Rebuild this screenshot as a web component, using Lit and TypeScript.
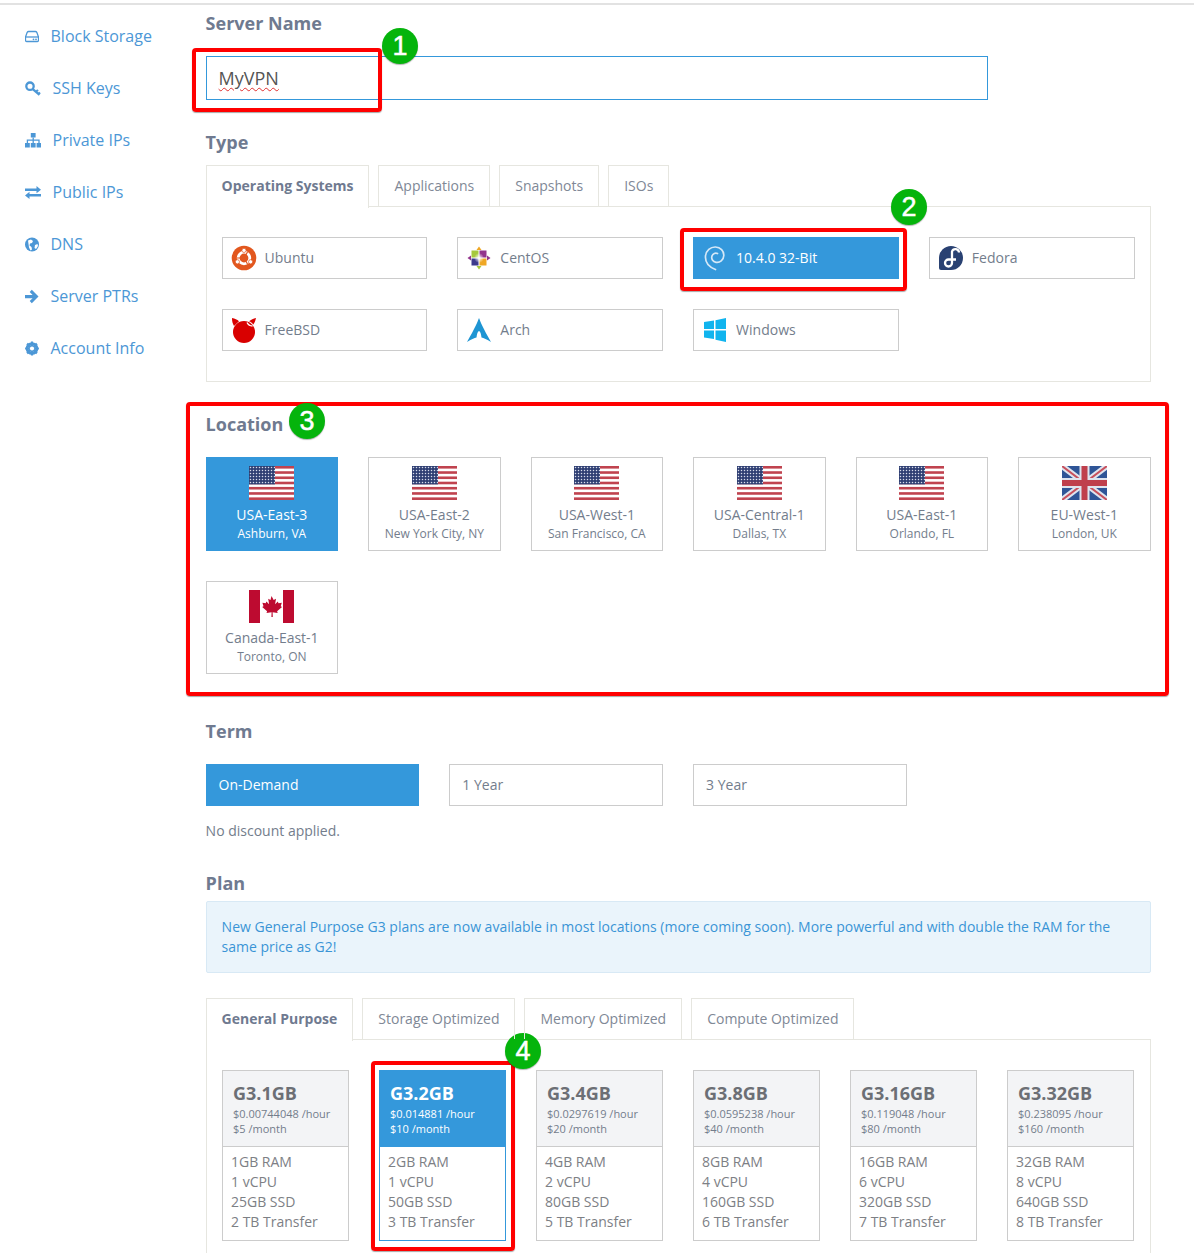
import { LitElement, html, css, svg } from 'lit';
import { customElement } from 'lit/decorators.js';

const usFlag = (id: string) => html`<svg class="flag" viewBox="0 0 45 34" width="45" height="34">
  <rect width="45" height="34" fill="#fff" />
  ${[0, 1, 2, 3, 4, 5, 6].map((i) => svg`<rect y=${(i * 34) / 6.5} width="45" height="2.6" fill="#c0434f" />`)}
  <rect width="26" height="18.4" fill="#2f3f73" />
  <pattern id=${id} width="3" height="3" patternUnits="userSpaceOnUse"><circle cx="1.5" cy="1.5" r=".75" fill="#d8dcea" /></pattern>
  <rect width="26" height="18.4" fill="url(#${id})" />
</svg>`;

const ukFlag = html`<svg class="flag" viewBox="0 0 45 34" width="45" height="34">
  <rect width="45" height="34" fill="#2f5597" />
  <path d="M0 0L45 34M45 0L0 34" stroke="#dfe4ee" stroke-width="6" />
  <path d="M0 0L45 34M45 0L0 34" stroke="#c8505c" stroke-width="2" />
  <path d="M22.5 0V34M0 17H45" stroke="#dfe4ee" stroke-width="10" />
  <path d="M22.5 0V34M0 17H45" stroke="#bf3f4c" stroke-width="6" />
</svg>`;

const caFlag = html`<svg class="flag" viewBox="0 0 45 33" width="45" height="33">
  <rect width="45" height="33" fill="#fff" />
  <rect width="11" height="33" fill="#bd0b30" />
  <rect x="34" width="11" height="33" fill="#bd0b30" />
  <path d="M22.5 6l2.200 4 2.300-1.200-.9 5.400 2.700-2.700.7 1.800 3.300-.6-1.100 3.600 1.300.8-4.900 4.100.6 1.800-5.100-.7.2 4.700h-1.400l.2-4.700-5.100.7.6-1.800-4.900-4.100 1.300-.8-1.100-3.600 3.300.6.7-1.800 2.700 2.700-.9-5.400 2.300 1.200z" fill="#bd0b30" />
</svg>`;

const osIcons: Record<string, unknown> = {
  ubuntu: html`<svg viewBox="0 0 26 26" width="26" height="26">
    <circle cx="13" cy="13" r="12.3" fill="#e2571e" />
    <circle cx="13" cy="13" r="5.8" fill="none" stroke="#fff" stroke-width="2.8" />
    <circle cx="13" cy="5.4" r="2.1" fill="#fff" stroke="#e2571e" stroke-width=".7" />
    <circle cx="6.4" cy="16.8" r="2.1" fill="#fff" stroke="#e2571e" stroke-width=".7" />
    <circle cx="19.6" cy="16.800" r="2.1" fill="#fff" stroke="#e2571e" stroke-width=".7" />
    <path d="M6 13h3.500M16.500 7l-1.700 3M16.500 19l-1.700-3" stroke="#e2571e" stroke-width="1.200" />
  </svg>`,
  centos: html`<svg viewBox="0 0 26 26" width="26" height="26">
    <defs>
      <radialGradient id="centre"><stop offset="0" stop-color="#fff" /><stop offset="1" stop-color="#fff" stop-opacity="0" /></radialGradient>
    </defs>
    <rect x="5.500" y="5.500" width="7" height="7" fill="#a6c83c" />
    <rect x="13.500" y="5.500" width="7" height="7" fill="#93358c" />
    <rect x="5.500" y="13.500" width="7" height="7" fill="#3d3a8c" />
    <rect x="13.500" y="13.500" width="7" height="7" fill="#efa724" />
    <path d="M13 1.500l2.500 3.500h-5z" fill="#efa724" />
    <path d="M13 24.500l-2.500-3.500h5z" fill="#a6c83c" />
    <path d="M1.500 13l3.500-2.500v5z" fill="#93358c" />
    <path d="M24.500 13l-3.500 2.500v-5z" fill="#93358c" />
    <circle cx="13" cy="13" r="5" fill="url(#centre)" />
  </svg>`,
  debian: html`<svg viewBox="0 0 26 26" width="26" height="26" fill="none" stroke="#d5e8f7" stroke-width="1.700" stroke-linecap="round">
    <path d="M13.500 24.500C7 22 3 17 3.500 11 4 5.500 8.500 1.800 13.500 2c5 .2 8.500 4 8.300 8.500-.2 4.500-4 7.500-7.800 6.800-3.200-.6-5-3.500-4-6.300.8-2.300 3.500-3.500 5.500-2.400" />
  </svg>`,
  fedora: html`<svg viewBox="0 0 26 26" width="26" height="26">
    <path d="M13 1a12 12 0 1 1 0 24H3a2 2 0 0 1-2-2V13A12 12 0 0 1 13 1z" fill="#294172" />
    <path d="M21 7.500a3.600 3.600 0 0 0-7-1V18a3.500 3.500 0 1 1-3.500-3.500H18" fill="none" stroke="#fff" stroke-width="2.300" />
  </svg>`,
  freebsd: html`<svg viewBox="0 0 26 26" width="26" height="26">
    <circle cx="13" cy="15" r="11" fill="#d90000" />
    <path d="M1 1c3 .5 5 1.500 7 3.200L3 9C1.500 6.500 1 4 1 1zM25 1c-.5 2.500-1.300 4.500-2.600 6.500-1.200-1.500-2.600-2.600-4.400-3.300C20 3 22.500 1.500 25 1z" fill="#d90000" />
    <path d="M16 5.500c1 2 3 3.500 5.500 3.500" fill="none" stroke="#fff" stroke-width="1.300" />
  </svg>`,
  arch: html`<svg viewBox="0 0 26 26" width="26" height="26">
    <path d="M13 1C11.500 5 9 11 1 25c4-2.500 7.500-4.200 9.500-4.500.4-3 1-6 2.500-6.500 1.500.5 2.100 3.500 2.500 6.500 2 .3 5.500 2 9.500 4.500C17 11 14.500 5 13 1z" fill="#1e95d3" />
  </svg>`,
  windows: html`<svg viewBox="0 0 24 26" width="24" height="26">
    <path d="M1 5l10-1.500V12H1zM12.500 3.300L23 1v11H12.500zM1 13.500h10V22L1 20.500zM12.500 13.500H23V25l-10.500-2.300z" fill="#11b4ee" />
  </svg>`,
};

const navIcons: Record<string, unknown> = {
  storage: svg`<path d="M3.500 2.500h7c.6 0 1 .3 1.300.8L13.500 8v3.500a1 1 0 0 1-1 1h-11a1 1 0 0 1-1-1V8l1.700-4.700c.3-.5.700-.8 1.300-.8z" fill="none" stroke="currentColor" stroke-width="1.300" /><path d="M.5 8h13" stroke="currentColor" stroke-width="1.300" /><circle cx="8.500" cy="10.300" r=".9" fill="currentColor" /><circle cx="11" cy="10.300" r=".9" fill="currentColor" />`,
  key: svg`<circle cx="5" cy="5.200" r="3.700" fill="none" stroke="currentColor" stroke-width="2.300" /><path d="M7.500 7.800l7 6M11 10.800l2-1.800M13.500 13l1.500-1.500" stroke="currentColor" stroke-width="2.200" fill="none" />`,
  sitemap: svg`<rect x="5.800" y="0" width="4.800" height="4.500" fill="currentColor" /><rect x="0" y="10" width="4.800" height="4.500" fill="currentColor" /><rect x="5.800" y="10" width="4.800" height="4.500" fill="currentColor" /><rect x="11.600" y="10" width="4.800" height="4.500" fill="currentColor" /><path d="M8.200 4.500V10M2.400 10V7.200h11.600V10" fill="none" stroke="currentColor" stroke-width="1.300" />`,
  exchange: svg`<path d="M0 3.500h11.500V1l4.500 3.700-4.500 3.500V6H0z" fill="currentColor" /><path d="M16 9v2.500H4.500V14L0 10.500 4.500 6.800V9z" fill="currentColor" />`,
  globe: svg`<circle cx="7" cy="7.500" r="7" fill="currentColor" /><path d="M3 3.500l3-1 2 1.500-1 2-2 .5-.5 2 2 1.500.5 2.500-1.500 1-1.500-3zM10 8l2.500-1 .5 2-2 3-1.500-1z" fill="#fff" />`,
  arrow: svg`<path d="M6.800 .8l6.700 6.700-6.700 6.700-2.100-2.100 2.900-2.900H0V6h7.600L4.700 2.900z" fill="currentColor" />`,
  cog: svg`<circle cx="7" cy="7.500" r="4.800" fill="none" stroke="currentColor" stroke-width="3" /><path d="M7 .6v13.800M.1 7.500h13.800M2.100 2.600l9.800 9.800M11.900 2.600l-9.800 9.800" stroke="currentColor" stroke-width="2.200" /><circle cx="7" cy="7.500" r="2.100" fill="#fff" />`,
};

const NAV = [
  ['storage', 'Block Storage', 14],
  ['key', 'SSH Keys', 16],
  ['sitemap', 'Private IPs', 16],
  ['exchange', 'Public IPs', 16],
  ['globe', 'DNS', 14],
  ['arrow', 'Server PTRs', 14],
  ['cog', 'Account Info', 14],
] as const;

const OS = [
  ['ubuntu', 'Ubuntu', false],
  ['centos', 'CentOS', false],
  ['debian', '10.4.0 32-Bit', true],
  ['fedora', 'Fedora', false],
  ['freebsd', 'FreeBSD', false],
  ['arch', 'Arch', false],
  ['windows', 'Windows', false],
] as const;

const LOCATIONS = [
  ['us', 'USA-East-3', 'Ashburn, VA', true],
  ['us', 'USA-East-2', 'New York City, NY', false],
  ['us', 'USA-West-1', 'San Francisco, CA', false],
  ['us', 'USA-Central-1', 'Dallas, TX', false],
  ['us', 'USA-East-1', 'Orlando, FL', false],
  ['uk', 'EU-West-1', 'London, UK', false],
  ['ca', 'Canada-East-1', 'Toronto, ON', false],
] as const;

const PLANS = [
  ['G3.1GB', '$0.00744048', '$5', '1GB', '1', '25GB', '2'],
  ['G3.2GB', '$0.014881', '$10', '2GB', '1', '50GB', '3'],
  ['G3.4GB', '$0.0297619', '$20', '4GB', '2', '80GB', '5'],
  ['G3.8GB', '$0.0595238', '$40', '8GB', '4', '160GB', '6'],
  ['G3.16GB', '$0.119048', '$80', '16GB', '6', '320GB', '7'],
  ['G3.32GB', '$0.238095', '$160', '32GB', '8', '640GB', '8'],
];

// red boxes and numbered badges drawn over the page: [left, top, width, height]
const MARKS = [
  [192, 48, 190, 64],
  [680, 228, 227, 63],
  [186, 402, 983, 294],
  [371, 1061, 144, 190],
];
const BADGES = [
  [400, 46, '1'],
  [909, 207, '2'],
  [307, 421, '3'],
  [523, 1051, '4'],
] as const;

@customElement('app-root')
export class AppRoot extends LitElement {
  static override styles = css`
    :host {
      display: block;
      position: relative;
      width: 1194px;
      height: 1253px;
      overflow: hidden;
      background: #fff;
      font-family: 'Open Sans', sans-serif;
      font-size: 14px;
      color: #737d8c;
    }
    .topline {
      height: 2px;
      margin-top: 3px;
      background: #e2e2e2;
    }
    .page {
      display: flex;
    }
    .side {
      width: 205.600px;
      flex: none;
      padding: 5px 0 0 25px;
      box-sizing: border-box;
    }
    .side a {
      display: flex;
      align-items: center;
      height: 52px;
      gap: 12px;
      color: #4c97d6;
      font-size: 16px;
    }
    .side span {
      margin-left: -0.5px;
    }
    .side svg {
      flex: none;
    }
    .main {
      width: 945px;
      flex: none;
    }
    h2 {
      margin: 0;
      font-size: 18px;
      line-height: 24px;
      font-weight: 700;
      color: #6f7a90;
    }
    .name {
      margin-top: 6px;
    }
    .input {
      width: 782px;
      height: 44px;
      box-sizing: border-box;
      margin-top: 21px;
      padding-left: 12px;
      border: 1px solid #3498db;
      display: flex;
      align-items: center;
      font-size: 18px;
      color: #555;
    }
    .input span {
      text-decoration: underline wavy #e03030 1px;
      text-underline-offset: 2px;
    }
    .type-title {
      margin-top: 30px;
    }
    .tabs {
      display: flex;
      gap: 9px;
      height: 41px;
      margin-top: 11px;
      position: relative;
      z-index: 1;
    }
    .tab {
      padding: 0 15px;
      border: 1px solid #e6e6e0;
      border-bottom: 0;
      line-height: 39px;
      color: #808896;
      white-space: nowrap;
    }
    .tab.on {
      font-weight: 700;
      color: #6f7a90;
      background: #fff;
      height: 42px;
    }
    .panel {
      border: 1px solid #e6e6e0;
      padding: 30px 15px;
    }
    .os {
      display: grid;
      grid-template-columns: repeat(4, 1fr);
      gap: 30px;
    }
    .opt {
      height: 42px;
      box-sizing: border-box;
      border: 1px solid #ccc;
      display: flex;
      align-items: center;
      color: #737d8c;
    }
    .opt span {
      margin-bottom: 2px;
    }
    .opt.on {
      background: #3498db;
      border-color: #3498db;
      color: #fff;
    }
    .os .opt {
      padding-left: 8px;
      gap: 8px;
    }
    .os .opt svg {
      width: 26px;
      flex: none;
    }
    .loc-title {
      margin-top: 30px;
    }
    .locs {
      display: grid;
      grid-template-columns: repeat(6, 1fr);
      gap: 30px;
      margin-top: 21px;
    }
    .loc {
      height: 93.500px;
      box-sizing: border-box;
      border: 1px solid #ccc;
      padding-top: 8px;
      display: flex;
      flex-direction: column;
      align-items: center;
      color: #737d8c;
      text-align: center;
    }
    .loc.on {
      background: #3498db;
      border-color: #3498db;
      color: #fff;
    }
    .flag {
      display: block;
      flex: none;
    }
    .loc b {
      font-weight: 400;
      font-size: 14px;
      line-height: 20px;
      margin-top: 5px;
    }
    .loc small {
      font-size: 12px;
      line-height: 18px;
    }
    .term-title {
      margin-top: 45px;
    }
    .terms {
      display: grid;
      grid-template-columns: repeat(4, 1fr);
      gap: 30px;
      margin-top: 21px;
    }
    .terms .opt {
      padding-left: 12px;
    }
    .note {
      margin-top: 15px;
      line-height: 20px;
    }
    .plan-title {
      margin-top: 30px;
    }
    .info {
      margin-top: 6px;
      padding: 15px;
      height: 72px;
      box-sizing: border-box;
      background: #eaf4fb;
      border: 1px solid #d8e9f5;
      border-radius: 2px;
      color: #3a94d6;
      line-height: 20px;
    }
    .tabs.plans {
      margin-top: 25px;
    }
    .plan-panel {
      padding-left: 15.400px;
      padding-right: 15.600px;
    }
    .grid {
      display: grid;
      grid-template-columns: repeat(6, 127px);
      gap: 30px;
    }
    .plan {
      height: 171px;
      box-sizing: border-box;
      border: 1px solid #ccc;
    }
    .plan header {
      height: 76px;
      box-sizing: border-box;
      padding: 9px 0 0 10px;
      background: #f3f4f6;
      border-bottom: 1px solid #ccc;
      font-size: 11px;
      line-height: 15px;
    }
    .plan header strong {
      display: block;
      font-size: 18px;
      line-height: 26px;
      color: #6c6f75;
    }
    .plan ul {
      list-style: none;
      margin: 0;
      padding: 5px 0 0 8px;
      line-height: 20px;
      color: #7d8085;
    }
    .plan.on {
      border-color: #3498db;
    }
    .plan.on header {
      background: #3498db;
      border-bottom-color: #3498db;
      color: #fff;
    }
    .plan.on header strong {
      color: #fff;
    }
    .mark {
      position: absolute;
      box-sizing: border-box;
      border: 4px solid #f00;
      border-radius: 4px;
      box-shadow: 0 1px 1px rgba(0, 0, 0, 0.35);
      pointer-events: none;
    }
    .badge {
      position: absolute;
      width: 36px;
      height: 36px;
      margin: -18px 0 0 -18px;
      border-radius: 50%;
      background: #05b40c;
      box-shadow: 0 1px 1px rgba(0, 0, 0, 0.3);
      color: #fff;
      display: flex;
      align-items: center;
      justify-content: center;
      font-family: 'Liberation Sans', sans-serif;
      font-size: 27px;
      font-weight: 400;
      -webkit-text-stroke: 0.5px #fff;
    }
  `;

  private _flag(kind: string, i: number) {
    if (kind === 'uk') return ukFlag;
    if (kind === 'ca') return caFlag;
    return usFlag(`stars${i}`);
  }

  override render() {
    return html`
      <div class="topline"></div>
      <div class="page">
        <nav class="side">
          ${NAV.map(
            ([icon, label, w]) => html`<a>
              <svg viewBox="0 0 ${w} 15" width=${w} height="15">${navIcons[icon]}</svg><span>${label}</span>
            </a>`
          )}
        </nav>
        <div class="main">
          <h2 class="name">Server Name</h2>
          <div class="input"><span>MyVPN</span></div>

          <h2 class="type-title">Type</h2>
          <div class="tabs">
            <div class="tab on">Operating Systems</div>
            <div class="tab">Applications</div>
            <div class="tab">Snapshots</div>
            <div class="tab">ISOs</div>
          </div>
          <div class="panel os">
            ${OS.map(
              ([icon, label, on]) => html`<div class="opt ${on ? 'on' : ''}">${osIcons[icon]}<span>${label}</span></div>`
            )}
          </div>

          <h2 class="loc-title">Location</h2>
          <div class="locs">
            ${LOCATIONS.map(
              ([flag, name, city, on], i) => html`<div class="loc ${on ? 'on' : ''}">
                ${this._flag(flag, i)}<b>${name}</b><small>${city}</small>
              </div>`
            )}
          </div>

          <h2 class="term-title">Term</h2>
          <div class="terms">
            <div class="opt on"><span>On-Demand</span></div>
            <div class="opt"><span>1 Year</span></div>
            <div class="opt"><span>3 Year</span></div>
          </div>
          <div class="note">No discount applied.</div>

          <h2 class="plan-title">Plan</h2>
          <div class="info">
            New General Purpose G3 plans are now available in most locations (more coming soon). More powerful and with
            double the RAM for the same price as G2!
          </div>

          <div class="tabs plans">
            <div class="tab on">General Purpose</div>
            <div class="tab">Storage Optimized</div>
            <div class="tab">Memory Optimized</div>
            <div class="tab">Compute Optimized</div>
          </div>
          <div class="panel plan-panel">
            <div class="grid">
              ${PLANS.map(
                ([name, hour, month, ram, cpu, ssd, tb], i) => html`<div class="plan ${i === 1 ? 'on' : ''}">
                  <header>
                    <strong>${name}</strong>
                    ${hour} /hour<br />${month} /month
                  </header>
                  <ul>
                    <li>${ram} RAM</li>
                    <li>${cpu} vCPU</li>
                    <li>${ssd} SSD</li>
                    <li>${tb} TB Transfer</li>
                  </ul>
                </div>`
              )}
            </div>
          </div>
        </div>
      </div>
      ${MARKS.map(
        ([l, t, w, h]) => html`<div class="mark" style="left:${l}px;top:${t}px;width:${w}px;height:${h}px"></div>`
      )}
      ${BADGES.map(([x, y, n]) => html`<div class="badge" style="left:${x}px;top:${y}px">${n}</div>`)}
    `;
  }
}

declare global {
  interface HTMLElementTagNameMap {
    'app-root': AppRoot;
  }
}
